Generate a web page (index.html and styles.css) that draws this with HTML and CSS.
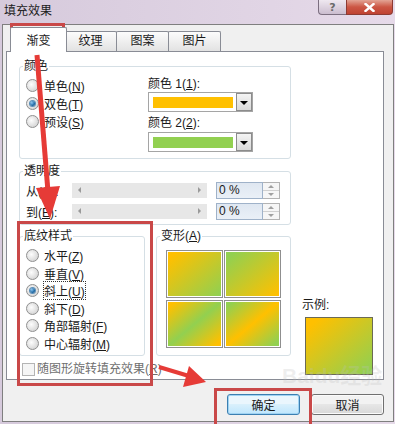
FILE: index.html
```html
<!DOCTYPE html>
<html>
<head>
    <meta charset="utf-8">
    <title>填充效果</title>
    <link rel="stylesheet" href="styles.css">
</head>
<body>
<div class="window">
    <div class="titlebar">
        <span class="title">填充效果</span>
        <div class="caption">
            <span class="cap-help">?</span>
            <span class="cap-close">
                <svg width="11" height="9" viewBox="0 0 11 9"><path d="M1.5 1 L9.5 8 M9.5 1 L1.5 8" stroke="#fff" stroke-width="2.4" stroke-linecap="square"/></svg>
            </span>
        </div>
    </div>

    <div class="client">
        <div class="tabs">
            <div class="tab active">渐变</div>
            <div class="tab">纹理</div>
            <div class="tab">图案</div>
            <div class="tab">图片</div>
        </div>

        <div class="panel">
            <div class="main">
                <!-- 颜色 -->
                <fieldset class="group colors">
                    <legend>颜色</legend>
                    <div class="colors-body">
                        <div class="radio-list">
                            <div class="opt"><span class="radio"></span><span>单色(<u>N</u>)</span></div>
                            <div class="opt"><span class="radio on"></span><span>双色(<u>T</u>)</span></div>
                            <div class="opt"><span class="radio"></span><span>预设(<u>S</u>)</span></div>
                        </div>
                        <div class="combos">
                            <div class="combo-label">颜色 1(<u>1</u>):</div>
                            <div class="combo"><span class="swatch yellow"></span><span class="drop"></span></div>
                            <div class="combo-label second">颜色 2(<u>2</u>):</div>
                            <div class="combo"><span class="swatch green"></span><span class="drop"></span></div>
                        </div>
                    </div>
                </fieldset>

                <!-- 透明度 -->
                <fieldset class="group transp">
                    <legend>透明度</legend>
                    <div class="transp-body">
                        <div class="t-row">
                            <span class="t-label">从(<u>O</u>):</span>
                            <span class="slider"><i class="arr-l"></i><i class="arr-r"></i></span>
                            <span class="spin"><span class="spin-val">0 %</span><span class="spin-btns"><i class="up"></i><i class="down"></i></span></span>
                        </div>
                        <div class="t-row">
                            <span class="t-label">到(<u>E</u>):</span>
                            <span class="slider"><i class="arr-l"></i><i class="arr-r"></i></span>
                            <span class="spin"><span class="spin-val">0 %</span><span class="spin-btns"><i class="up"></i><i class="down"></i></span></span>
                        </div>
                    </div>
                </fieldset>

                <div class="pair">
                    <!-- 底纹样式 -->
                    <fieldset class="group shading">
                        <legend>底纹样式</legend>
                        <div class="shading-body">
                            <div class="opt"><span class="radio"></span><span>水平(<u>Z</u>)</span></div>
                            <div class="opt"><span class="radio"></span><span>垂直(<u>V</u>)</span></div>
                            <div class="opt"><span class="radio on"></span><span class="focus">斜上(<u>U</u>)</span></div>
                            <div class="opt"><span class="radio"></span><span>斜下(<u>D</u>)</span></div>
                            <div class="opt"><span class="radio"></span><span>角部辐射(<u>F</u>)</span></div>
                            <div class="opt"><span class="radio"></span><span>中心辐射(<u>M</u>)</span></div>
                        </div>
                    </fieldset>

                    <!-- 变形 -->
                    <fieldset class="group variants">
                        <legend>变形(<u>A</u>)</legend>
                        <div class="tiles">
                            <div class="tile v1"></div>
                            <div class="tile v2"></div>
                            <div class="tile v3"></div>
                            <div class="tile v4"></div>
                        </div>
                    </fieldset>
                </div>

                <div class="check"><span class="box"></span><span>随图形旋转填充效果(<u>R</u>)</span></div>
            </div>

            <div class="sample">
                <div class="sample-label">示例:</div>
                <div class="sample-box"></div>
            </div>
        </div>

        <div class="buttons">
            <button class="btn default">确定</button>
            <button class="btn">取消</button>
        </div>
    </div>

    <!-- annotations drawn over the dialog -->
    <div class="watermark">Baidu经验</div>
    <div class="mark mark-tab"></div>
    <div class="mark mark-style"></div>
    <div class="mark mark-ok"></div>
    <svg class="arrows" width="395" height="424" viewBox="0 0 395 424">
        <line x1="37" y1="55" x2="48" y2="192" stroke="#e63b37" stroke-width="5"/>
        <polygon points="36,188 60,186 50,219" fill="#e63b37"/>
        <line x1="159" y1="367" x2="189" y2="376" stroke="#e63b37" stroke-width="4"/>
        <polygon points="189,366 183,387 206,382" fill="#e63b37"/>
    </svg>
</div>
</body>
</html>
```

FILE: styles.css
```css
body {
    margin: 0;
    font-family: "Liberation Sans", "Noto Sans CJK SC", sans-serif;
    font-size: 12px;
    color: #1a1a1a;
}
u {
    text-decoration-thickness: 1px;
    text-underline-offset: 1px;
}
.window {
    position: relative;
    width: 395px;
    height: 424px;
    overflow: hidden;
    background: linear-gradient(to right, #d6cadc, #e6dae9);
}

/* title bar */
.titlebar {
    height: 24px;
    display: flex;
    justify-content: space-between;
    align-items: flex-start;
}
.title {
    padding-left: 4px;
    line-height: 23px;
    color: #1c1c1c;
}
.caption {
    display: flex;
    margin-right: 2px;
}
.cap-help, .cap-close {
    height: 15px;
    box-sizing: border-box;
    display: flex;
    align-items: center;
    justify-content: center;
    border: 1px solid #7c6f80;
    border-top: none;
}
.cap-help {
    width: 28px;
    border-right: none;
    border-radius: 0 0 0 4px;
    background: linear-gradient(#efe8f0, #cbbdcf);
    color: #6a6a6a;
    font: bold 11px "DejaVu Sans", sans-serif;
}
.cap-close {
    width: 47px;
    border-color: #8d3b33;
    border-radius: 0 0 4px 0;
    background: linear-gradient(#e3a495, #cc5644 50%, #bf4333);
}

/* client area */
.client {
    margin-left: 2px;
    width: 392px;
    height: 398px;
    box-sizing: border-box;
    border: 1px solid #7f7f7f;
    background: #f0f0f0;
}
.tabs {
    display: flex;
    align-items: flex-end;
    height: 26px;
    padding-left: 9px;
}
.tab {
    width: 53px;
    height: 20px;
    box-sizing: border-box;
    margin-left: -1px;
    border: 1px solid #898c95;
    border-bottom: none;
    border-radius: 2px 2px 0 0;
    background: linear-gradient(#fcfcfc, #e2e2e2);
    text-align: center;
    line-height: 19px;
}
.tab.active {
    position: relative;
    z-index: 1;
    width: 57px;
    height: 25px;
    margin: 0 -2px -1px -2px;
    padding-top: 4px;
    background: #fff;
}
.panel {
    margin-left: 3px;
    width: 378px;
    height: 329px;
    box-sizing: border-box;
    border: 1px solid #898c95;
    background: #fff;
    display: flex;
    gap: 11px;
    padding: 7px 0 0 12px;
}
.main {
    width: 272px;
    display: flex;
    flex-direction: column;
}

/* group boxes */
.group {
    margin: 0;
    padding: 0 6px;
    min-width: 0;
    border: 1px solid #d5dfe5;
    border-radius: 3px;
}
.group legend {
    margin-left: -3px;
    padding: 0 1px;
    line-height: 14px;
}
.opt {
    display: flex;
    align-items: center;
    gap: 5px;
    height: 18px;
}
.radio {
    width: 13px;
    height: 13px;
    box-sizing: border-box;
    border-radius: 50%;
    border: 1px solid #8f8f8f;
    background: radial-gradient(circle at 40% 40%, #fdfdfd, #d9d9d9 70%, #c8c8c8);
    display: flex;
    align-items: center;
    justify-content: center;
}
.radio.on::after {
    content: "";
    width: 5px;
    height: 5px;
    border-radius: 50%;
    background: radial-gradient(circle at 35% 35%, #8ec6ef, #1f6aa6 60%, #134c7a);
    box-shadow: 0 0 0 1px #5c8fb8;
}

.colors-body {
    display: flex;
    padding: 3px 0 6px;
}
.radio-list {
    width: 122px;
}
.combos {
    width: 105px;
    padding-top: 1px;
}
.combo-label {
    line-height: 14px;
    margin-bottom: 1px;
}
.combo-label.second {
    margin: 4px 0 2px;
}
.combo {
    height: 20px;
    box-sizing: border-box;
    border: 1px solid #a5a5a5;
    display: flex;
    align-items: center;
    padding-left: 4px;
}
.swatch {
    width: 80px;
    height: 11px;
}
.swatch.yellow { background: #ffc000; }
.swatch.green { background: #92d050; }
.drop {
    margin-left: auto;
    width: 16px;
    height: 18px;
    box-sizing: border-box;
    border: 1px solid #8c8c8c;
    background: linear-gradient(#f4f4f4, #d8d8d8);
    display: flex;
    align-items: center;
    justify-content: center;
}
.drop::after {
    content: "";
    border-left: 4px solid transparent;
    border-right: 4px solid transparent;
    border-top: 4px solid #000;
    margin-top: 1px;
}

/* transparency */
.transp {
    margin-top: 5px;
}
.transp-body {
    padding: 3px 0 4px;
    display: flex;
    flex-direction: column;
    gap: 3px;
}
.t-row {
    display: flex;
    align-items: center;
    height: 18px;
}
.t-label {
    width: 46px;
}
.slider {
    width: 135px;
    height: 15px;
    background: #e7e7e7;
    display: flex;
    align-items: center;
    justify-content: space-between;
    padding: 0 6px;
    box-sizing: border-box;
}
.arr-l, .arr-r {
    border-top: 3px solid transparent;
    border-bottom: 3px solid transparent;
}
.arr-l { border-right: 3px solid #9a9a9a; }
.arr-r { border-left: 3px solid #9a9a9a; }
.spin {
    margin-left: 9px;
    width: 64px;
    height: 17px;
    display: flex;
}
.spin-val {
    flex: 1;
    border: 1px solid #9fb2c9;
    background: linear-gradient(#dfe7f1, #eaf0f7);
    line-height: 15px;
    padding-left: 2px;
}
.spin-btns {
    width: 16px;
    display: flex;
    flex-direction: column;
    border: 1px solid #b3b3b3;
    border-left: none;
    background: #f6f6f6;
}
.spin-btns i {
    flex: 1;
    display: flex;
    align-items: center;
    justify-content: center;
}
.spin-btns .up { border-bottom: 1px solid #d0d0d0; }
.spin-btns .up::after, .spin-btns .down::after {
    content: "";
    border-left: 3px solid transparent;
    border-right: 3px solid transparent;
}
.spin-btns .up::after { border-bottom: 3px solid #a0a0a0; }
.spin-btns .down::after { border-top: 3px solid #a0a0a0; }

/* shading styles + variants */
.pair {
    margin-top: 4px;
    display: flex;
    gap: 11px;
}
.shading {
    width: 126px;
    box-sizing: border-box;
}
.shading-body {
    padding: 4px 0 3px;
}
.shading-body .opt {
    height: 17.5px;
}
.focus {
    outline: 1px dotted #333;
    outline-offset: 0;
}
.variants {
    flex: 1;
}
.tiles {
    display: grid;
    grid-template-columns: 57px 57px;
    grid-template-rows: 48px 48px;
    gap: 2px 1px;
    padding: 7px 0 0 3px;
}
.tile {
    border: 1px solid #8f8f8f;
    box-shadow: inset 0 0 0 1px #fff;
}
.v1 { background: linear-gradient(to bottom right, #ffc000 10%, #92d050 95%); }
.v2 { background: linear-gradient(to bottom right, #92d050 10%, #ffc000 95%); }
.v3 { background: linear-gradient(to bottom right, #ffc000 8%, #92d050 50%, #ffc000 92%); }
.v4 { background: linear-gradient(to bottom right, #92d050 8%, #ffc000 50%, #92d050 92%); }

.check {
    margin-top: 6px;
    padding-left: 3px;
    display: flex;
    align-items: center;
    gap: 2px;
    line-height: 14px;
    color: #6f6f6f;
}
.check .box {
    width: 11px;
    height: 11px;
    border: 1px solid #b4b4b4;
    background: #f5f5f5;
}

/* sample */
.sample {
    display: flex;
    flex-direction: column;
    justify-content: flex-end;
    padding-bottom: 4px;
}
.sample-label {
    line-height: 14px;
}
.sample-box {
    margin: 5px 0 0 3px;
    width: 68px;
    height: 58px;
    box-sizing: border-box;
    border: 1px solid #6b6a55;
    background: linear-gradient(to bottom right, #ffc000 10%, #92d050 95%);
}

/* buttons */
.buttons {
    display: flex;
    justify-content: flex-end;
    gap: 11px;
    margin-top: 14px;
    padding-right: 9px;
}
.btn {
    width: 73px;
    height: 21px;
    padding: 0;
    font: inherit;
    color: #1a1a1a;
    border: 1px solid #707070;
    border-radius: 3px;
    background: linear-gradient(#f2f2f2 45%, #e6e6e6 50%, #d8d8d8);
    box-shadow: inset 0 0 0 1px #fbfbfb;
}
.btn.default {
    border-color: #3c7fb1;
    background: linear-gradient(#eaf6fd 45%, #d9f0fc 50%, #bee6fd);
    box-shadow: inset 0 0 0 1px #9fd3f3;
}

/* annotations */
.mark {
    position: absolute;
    border: 3px solid #c94848;
}
.mark-tab {
    left: 10px;
    top: 23px;
    width: 49px;
    height: 23px;
}
.mark-style {
    left: 17px;
    top: 221px;
    width: 130px;
    height: 159px;
}
.mark-ok {
    left: 214px;
    top: 388px;
    width: 92px;
    height: 40px;
}
.arrows {
    position: absolute;
    left: 0;
    top: 0;
}
.watermark {
    position: absolute;
    left: 282px;
    top: 364px;
    font: bold 21px "Liberation Sans", "Noto Sans CJK SC", sans-serif;
    color: rgba(190, 190, 190, 0.25);
    line-height: 24px;
}
```
